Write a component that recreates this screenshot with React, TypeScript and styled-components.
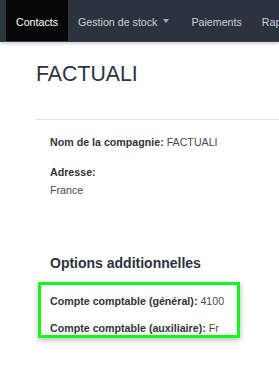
import React from 'react';
import styled, { createGlobalStyle } from 'styled-components';

const GlobalStyle = createGlobalStyle`
  html, body {
    margin: 0;
    padding: 0;
    background: #ffffff;
    font-family: 'Liberation Sans', Arial, Helvetica, sans-serif;
  }
`;

const Page = styled.div`
  width: 279px;
  height: 367px;
  overflow: hidden;
  background: #ffffff;
`;

const NavBar = styled.nav`
  display: flex;
  align-items: stretch;
  height: 41px;
  padding-left: 6px;
  background: #2b333e;
  border-bottom: 1px solid #3a4250;
  box-shadow: 0 2px 3px rgba(0, 0, 0, 0.18);
  overflow: hidden;
  white-space: nowrap;
`;

const NavItem = styled.a<{ $active?: boolean }>`
  display: flex;
  align-items: center;
  padding: 2px 10px 0;
  font-size: 10.67px;
  text-decoration: none;
  color: ${(p) => (p.$active ? '#ffffff' : 'rgba(255, 255, 255, 0.78)')};
  background: ${(p) => (p.$active ? '#070707' : 'transparent')};
`;

const Caret = styled.span`
  display: inline-block;
  margin: -1px 2px 0 6px;
  border-top: 4px solid rgba(255, 255, 255, 0.6);
  border-left: 3px solid transparent;
  border-right: 3px solid transparent;
`;

const Main = styled.main`
  padding: 20px 0 0 36px;
`;

const Title = styled.h1`
  margin: 0;
  font-size: 21.3px;
  line-height: 25.6px;
  font-weight: 400;
  color: #2b3340;
`;

const Divider = styled.hr`
  margin: 31px 0 0;
  border: 0;
  border-top: 1px solid #dfe3ea;
`;

const Details = styled.section`
  padding: 13px 0 0 14px;
`;

const Field = styled.div<{ $gap?: number }>`
  margin-top: ${(p) => p.$gap ?? 0}px;
  font-size: 10.67px;
  line-height: 18px;
  color: #4a4a4a;
`;

const Label = styled.strong`
  font-weight: 700;
  color: #333333;
`;

const SectionTitle = styled.h4`
  margin: 56px 0 0 14px;
  font-size: 14px;
  line-height: 17px;
  font-weight: 700;
  color: #2b3340;
`;

const Highlight = styled.div`
  box-sizing: border-box;
  width: 202px;
  margin: 10px 0 0 2px;
  padding: 9px 0 0 9px;
  border: 3px solid #14f51c;
  box-shadow: 0 2px 6px rgba(0, 0, 0, 0.28);
`;

const Row = styled.div<{ $gap?: number }>`
  margin-top: ${(p) => p.$gap ?? 0}px;
  font-size: 10.67px;
  line-height: 14px;
  color: #4a4a4a;
  white-space: nowrap;
`;

export default function App() {
  return (
    <Page>
      <GlobalStyle />
      <NavBar>
        <NavItem $active>Contacts</NavItem>
        <NavItem>
          Gestion de stock
          <Caret />
        </NavItem>
        <NavItem>Paiements</NavItem>
        <NavItem>Rapports</NavItem>
      </NavBar>
      <Main>
        <Title>FACTUALI</Title>
        <Divider />
        <Details>
          <Field>
            <Label>Nom de la compagnie:</Label> FACTUALI
          </Field>
          <Field $gap={12}>
            <Label>Adresse:</Label>
          </Field>
          <Field>France</Field>
        </Details>
        <SectionTitle>Options additionnelles</SectionTitle>
        <Highlight>
          <Row>
            <Label>Compte comptable (général):</Label> 4100
          </Row>
          <Row $gap={13}>
            <Label>Compte comptable (auxiliaire):</Label> Fr
          </Row>
        </Highlight>
      </Main>
    </Page>
  );
}
